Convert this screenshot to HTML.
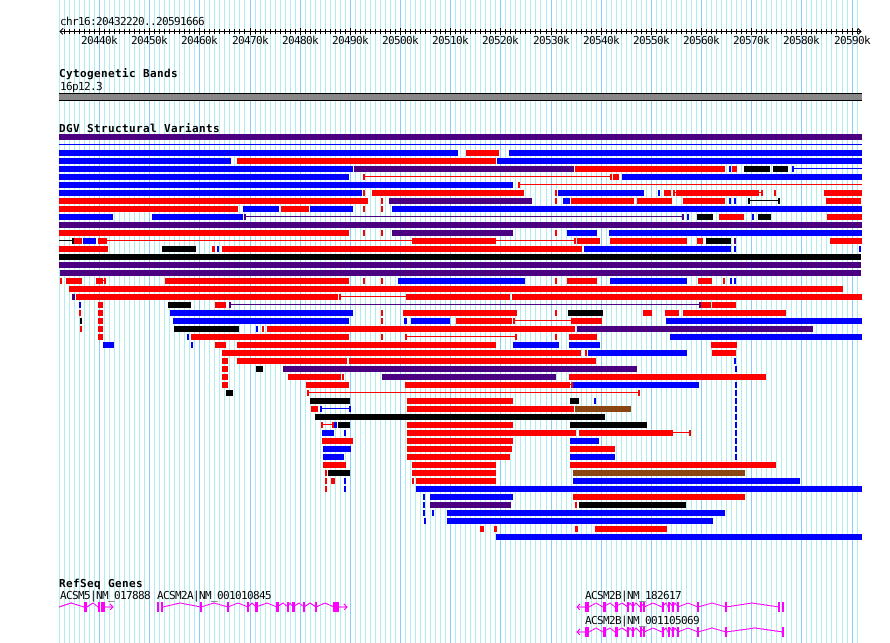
<!DOCTYPE html>
<html><head><meta charset="utf-8"><title>GBrowse</title>
<style>
html,body{margin:0;padding:0;background:#fff}
#w{position:relative;width:890px;height:643px;overflow:hidden;background:#fff}
.g{position:absolute;top:0;height:643px;background:repeating-linear-gradient(90deg,#afeeee 0,#afeeee 1px,transparent 1px,transparent 5px)}
.t{position:absolute;top:29px;height:5px;background:repeating-linear-gradient(90deg,#000 0,#000 1px,transparent 1px,transparent 5px)}
svg{position:absolute;left:0;top:0}
.b path{fill:none;stroke-width:6}
.l path{fill:none;stroke-width:1}
text{font-family:"DejaVu Sans Mono","Liberation Mono",monospace;font-size:11px;letter-spacing:-.62px;fill:#000;text-rendering:geometricPrecision}
text.h{font-weight:bold;letter-spacing:.38px}
</style></head><body><div id="w">
<div class="g" style="left:59px;width:190px"></div>
<div class="g" style="left:250px;width:295px"></div>
<div class="g" style="left:546px;width:295px"></div>
<div class="g" style="left:842px;width:20px"></div>
<svg width="890" height="643" viewBox="0 0 890 643" shape-rendering="crispEdges">
<path stroke="#87cefa" fill="none" d="M99.5 0V643M149.5 0V643M199.5 0V643M250.5 0V643M300.5 0V643M350.5 0V643M400.5 0V643M450.5 0V643M500.5 0V643M551.5 0V643M601.5 0V643M651.5 0V643M701.5 0V643M751.5 0V643M801.5 0V643M852.5 0V643"/>
<path stroke="#000" fill="none" d="M60 31.5H860"/>
<path stroke="#000" fill="none" d="M63 28.5L60 31.5L63 34.5M858 28.5L861 31.5L858 34.5"/>
<path stroke="#000" fill="none" d="M99.5 28V35M149.5 28V35M199.5 28V35M250.5 28V35M300.5 28V35M350.5 28V35M400.5 28V35M450.5 28V35M500.5 28V35M551.5 28V35M601.5 28V35M651.5 28V35M701.5 28V35M751.5 28V35M801.5 28V35M852.5 28V35"/>
<rect x="59" y="93" width="803" height="8" fill="#000"/>
<rect x="59" y="94" width="803" height="6" fill="#888"/>

<g class="b">
<path stroke="#f00" d="M466 153H499
M237 161H496
M575 169H725M732 169H737
M363 177H365M610 177H612M613 177H619
M518 185H520
M363 193H365M372 193H524M555 193H557M664 193H671M673 193H675M676 193H759M761 193H763M774 193H776M824 193H862
M59 201H368M381 201H383M555 201H557M571 201H634M637 201H672M683 201H725M826 201H861
M59 209H238M281 209H309M363 209H365M381 209H383
M719 217H744M827 217H862
M59 233H349M363 233H365M381 233H383M555 233H557
M74 241H82M98 241H107M412 241H496M574 241H576M577 241H600M610 241H687M697 241H703M830 241H862
M59 249H108M212 249H215M222 249H582
M60 281H62M66 281H82M96 281H103M104 281H106M165 281H349M363 281H365M381 281H383M555 281H557M567 281H597M698 281H712M723 281H725
M69 289H843
M76 297H338M339 297H341M406 297H510M512 297H862
M98 305H103M215 305H226M701 305H711M712 305H736
M79 313H81M98 313H103M381 313H383M403 313H517M555 313H557M643 313H652M665 313H679M683 313H786
M98 321H103M381 321H383M456 321H512M513 321H515M571 321H602
M80 329H82M98 329H103M262 329H264M267 329H575
M98 337H103M191 337H349M381 337H383M405 337H407M515 337H517M555 337H557M569 337H597
M215 345H226M237 345H496M711 345H737
M222 353H581M585 353H587M712 353H736
M222 361H228M237 361H347M349 361H596
M222 369H228
M222 377H228M288 377H341M342 377H344M569 377H766
M222 385H228M306 385H349M405 385H570M571 385H573
M307 393H309M638 393H640
M407 401H513
M311 409H318M407 409H574
M321 425H323M332 425H334M407 425H513
M407 433H576M579 433H673M689 433H691
M322 441H353M407 441H513
M407 449H512M570 449H615
M407 457H510
M323 465H346M412 465H496M570 465H776
M325 473H327M412 473H496
M325 481H327M331 481H335M412 481H414M416 481H496
M325 489H327
M573 497H745
M575 505H577
M480 529H484M494 529H497M575 529H578M595 529H667"/>
<path stroke="#00f" d="M59 153H458M509 153H862
M59 161H231M497 161H862
M59 169H353M729 169H731M792 169H794
M59 177H349M622 177H862
M59 185H513
M59 193H362M558 193H644M658 193H660
M563 201H570M729 201H731M734 201H736
M243 209H279M310 209H353M392 209H862
M59 217H113M152 217H243M687 217H689M752 217H754
M567 233H597M609 233H862
M83 241H96
M217 249H219M584 249H731M734 249H736M859 249H861
M398 281H525M610 281H687M730 281H732M734 281H736
M79 305H81
M170 313H353
M173 321H349M404 321H407M411 321H450M666 321H862
M256 329H258
M187 337H189M670 337H862
M103 345H114M191 345H193M513 345H559M569 345H600
M588 353H687
M734 361H736
M735 369H737
M573 385H699M735 385H737
M735 393H737
M594 401H596M735 401H737
M320 409H322M349 409H351M735 409H737
M735 417H737
M334 425H337M735 425H737
M322 433H334M344 433H346M735 433H737
M570 441H599M735 441H737
M323 449H351M735 449H737
M323 457H344M570 457H615M735 457H737
M344 481H346M573 481H800
M344 489H346M416 489H862
M423 497H425M430 497H513
M423 505H425
M423 513H425M432 513H434M447 513H725
M424 521H426M447 521H713
M496 537H862"/>
<path stroke="#4b0082" d="M59 137H862
M354 169H574
M389 201H532
M244 217H246M682 217H684
M59 225H862
M392 233H513
M734 241H736
M59 265H861
M60 273H861
M72 297H75
M229 305H231M699 305H701
M577 329H813
M283 369H637
M382 377H556
M430 505H511"/>
<path stroke="#000" d="M744 169H770M773 169H788
M748 201H750M778 201H780
M697 217H713M758 217H771
M72 241H74M706 241H731
M162 249H196
M59 257H861
M168 305H191
M568 313H603
M80 321H82
M174 329H239
M256 369H263
M226 393H233
M310 401H350M570 401H579
M315 417H605
M338 425H350M570 425H647
M328 473H350
M579 505H686"/>
<path stroke="#8b4513" d="M575 409H631M573 473H745"/>
</g>
<g class="l">
<path stroke="#f00" d="M365 176.5H610M520 184.5H862M675 192.5H676M759 192.5H761M107 240.5H412M496 240.5H574M103 280.5H104M341 296.5H406M515 320.5H571M407 336.5H515M570 384.5H571M309 392.5H638M323 424.5H332M673 432.5H689"/>
<path stroke="#00f" d="M59 144.5H862M794 168.5H862M322 408.5H349"/>
<path stroke="#4b0082" d="M246 216.5H682M231 304.5H699"/>
<path stroke="#000" d="M750 200.5H778M59 240.5H72"/>
</g>

<!-- genes -->
<g stroke="#f0f" fill="none">
<path d="M59 607L71 603L84 607M87 607L93 603L98 607M105 607H113M110 604L113 607L110 610"/>
<path d="M84.5 602V612M85.5 602V612M86.5 602V612M98.5 602V612M99.5 602V612M101.5 602V612M102.5 602V612M103.5 602V612M104.5 602V612"/>
<path d="M157.5 602V612M158.5 602V612M161.5 602V612M162.5 602V612M200.5 602V612M201.5 602V612M227.5 602V612M228.5 602V612M247.5 602V612M248.5 602V612M255.5 602V612M256.5 602V612M257.5 602V612M276.5 602V612M277.5 602V612M278.5 602V612M287.5 602V612M288.5 602V612M292.5 602V612M293.5 602V612M294.5 602V612M303.5 602V612M304.5 602V612M315.5 602V612M316.5 602V612M333.5 602V612M334.5 602V612M335.5 602V612M336.5 602V612M337.5 602V612M338.5 602V612"/>
<path d="M163 607L180 603L201 607L214 603L228 607L238 603L248 607L252 603L256 607L267 603L277 607L283 603L288 607L290 603L293 607L299 603L304 607L310 603L316 607L325 603L334 607M339 607H347M344 604L347 607L344 610"/>
<path d="M577 607H585M580 604L577 607L580 610M589 607L596 603L603 607L610 603L615 607L622 603L628 607L630 603L633 607L636 603L640 607L641 603L644 607L653 603L662 607L666 603L668 607L670 603L673 607L675 603L678 607L688 603L698 607L712 603L726 607L752 603L779 607"/>
<path d="M585.5 602V612M586.5 602V612M587.5 602V612M588.5 602V612M603.5 602V612M604.5 602V612M605.5 602V612M615.5 602V612M616.5 602V612M617.5 602V612M627.5 602V612M628.5 602V612M632.5 602V612M633.5 602V612M640.5 602V612M641.5 602V612M643.5 602V612M644.5 602V612M662.5 602V612M663.5 602V612M668.5 602V612M669.5 602V612M672.5 602V612M673.5 602V612M677.5 602V612M678.5 602V612M697.5 602V612M698.5 602V612M725.5 602V612M726.5 602V612M778.5 602V612M779.5 602V612M782.5 602V612M783.5 602V612"/>
<path d="M577 632H585M580 629L577 632L580 635M589 632L596 628L603 632L610 628L615 632L622 628L628 632L630 628L633 632L636 628L640 632L641 628L644 632L653 628L662 632L666 628L668 632L670 628L673 632L675 628L678 632L688 628L698 632L712 628L726 632L755 628L783 632"/>
<path d="M585.5 627V637M586.5 627V637M587.5 627V637M588.5 627V637M603.5 627V637M604.5 627V637M605.5 627V637M615.5 627V637M616.5 627V637M617.5 627V637M627.5 627V637M628.5 627V637M632.5 627V637M633.5 627V637M640.5 627V637M641.5 627V637M643.5 627V637M644.5 627V637M662.5 627V637M663.5 627V637M668.5 627V637M669.5 627V637M672.5 627V637M673.5 627V637M677.5 627V637M678.5 627V637M697.5 627V637M698.5 627V637M725.5 627V637M726.5 627V637M782.5 627V637M783.5 627V637"/>
</g>

<text x="60" y="25">chr16:20432220..20591666</text>
<text x="81" y="44">20440k</text><text x="131" y="44">20450k</text><text x="181" y="44">20460k</text><text x="232" y="44">20470k</text><text x="282" y="44">20480k</text><text x="332" y="44">20490k</text><text x="382" y="44">20500k</text><text x="432" y="44">20510k</text><text x="482" y="44">20520k</text><text x="533" y="44">20530k</text><text x="583" y="44">20540k</text><text x="633" y="44">20550k</text><text x="683" y="44">20560k</text><text x="733" y="44">20570k</text><text x="783" y="44">20580k</text><text x="834" y="44">20590k</text>
<text class="h" x="59" y="77">Cytogenetic Bands</text>
<text x="60" y="90">16p12.3</text>
<text class="h" x="59" y="132">DGV Structural Variants</text>
<text class="h" x="59" y="587">RefSeq Genes</text>
<text x="60" y="599">ACSM5|NM_017888</text>
<text x="157" y="599">ACSM2A|NM_001010845</text>
<text x="585" y="599">ACSM2B|NM_182617</text>
<text x="585" y="624">ACSM2B|NM_001105069</text>
</svg>
<div class="t" style="left:64px;width:185px;z-index:1"></div>
<div class="t" style="left:250px;width:295px;z-index:1"></div>
<div class="t" style="left:546px;width:295px;z-index:1"></div>
<div class="t" style="left:842px;width:17px;z-index:1"></div>
</div></body></html>
